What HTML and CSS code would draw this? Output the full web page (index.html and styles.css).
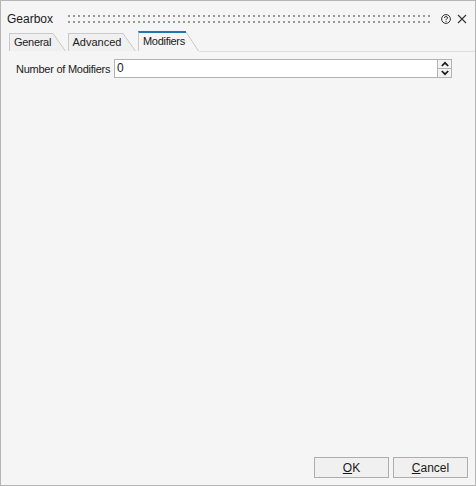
FILE: index.html
```html
<!DOCTYPE html>
<html>
<head>
<meta charset="utf-8">
<link rel="stylesheet" href="styles.css">
</head>
<body>
<div class="window">
  <div class="titlebar">
    <span class="title">Gearbox</span>
    <span class="grip"></span>
    <svg class="icon help" width="10" height="10" viewBox="0 0 10 10">
      <circle cx="5" cy="5" r="4.4" fill="none" stroke="#333" stroke-width="1"/>
      <path d="M3.4 3.9 Q3.4 2.6 5 2.6 Q6.6 2.6 6.6 3.8 Q6.6 4.6 5.6 5 Q5 5.3 5 6.1" fill="none" stroke="#333" stroke-width="1"/>
      <rect x="4.5" y="6.9" width="1" height="1" fill="#333"/>
    </svg>
    <svg class="icon close" width="10" height="10" viewBox="0 0 10 10">
      <path d="M1 1 L9 9 M9 1 L1 9" stroke="#333" stroke-width="1.1"/>
    </svg>
  </div>
  <div class="tabs">
    <div class="tab">
      <span class="tab-label tab-general">General</span>
      <svg class="tab-edge" width="13" height="18" viewBox="0 0 13 18"><polygon points="0,0 0.5,0 12.5,18 0,18" fill="#f0f0f0"/><line x1="0" y1="0.5" x2="12.5" y2="18" stroke="#c9c9c9" stroke-width="1"/></svg>
    </div>
    <div class="tab">
      <span class="tab-label tab-advanced">Advanced</span>
      <svg class="tab-edge" width="13" height="18" viewBox="0 0 13 18"><polygon points="0,0 0.5,0 12.5,18 0,18" fill="#f0f0f0"/><line x1="0" y1="0.5" x2="12.5" y2="18" stroke="#c9c9c9" stroke-width="1"/></svg>
    </div>
    <div class="tab tab-active">
      <span class="tab-label tab-modifiers">Modifiers</span>
      <svg class="tab-edge" width="13" height="20" viewBox="0 0 13 20"><polygon points="0,0 0.5,0 12.5,20 0,20" fill="#f5f5f5"/><line x1="0" y1="1" x2="12.5" y2="20" stroke="#c9c9c9" stroke-width="1"/></svg>
    </div>
    <div class="tab-fill"></div>
  </div>
  <div class="content">
    <div class="field-row">
      <span class="field-label">Number of Modifiers</span>
      <div class="spinbox">
        <div class="spin-input">0</div>
        <div class="spin-buttons">
          <div class="spin-btn">
            <svg width="8" height="6" viewBox="0 0 8 6"><path d="M0.8 5 L4 1.8 L7.2 5" fill="none" stroke="#1a1a1a" stroke-width="1.7"/></svg>
          </div>
          <div class="spin-btn">
            <svg width="8" height="6" viewBox="0 0 8 6"><path d="M0.8 1 L4 4.2 L7.2 1" fill="none" stroke="#1a1a1a" stroke-width="1.7"/></svg>
          </div>
        </div>
      </div>
    </div>
  </div>
  <div class="buttons">
    <button class="btn"><span class="u">O</span>K</button>
    <button class="btn"><span class="u">C</span>ancel</button>
  </div>
</div>
</body>
</html>
```
FILE: styles.css
```css
html, body {
  margin: 0;
  padding: 0;
}
body {
  font-family: "Liberation Sans", Arial, sans-serif;
  font-size: 11px;
  color: #1a1a1a;
  background: #f5f5f5;
}
.window {
  width: 476px;
  height: 486px;
  box-sizing: border-box;
  border: 1px solid #b5b5b5;
  background: #f5f5f5;
  display: flex;
  flex-direction: column;
}
.titlebar {
  height: 24px;
  padding-top: 6px;
  padding-left: 6px;
  padding-right: 8px;
  display: flex;
  align-items: center;
}
.title {
  font-size: 12px;
  color: #1a1a1a;
}
.grip {
  flex: 1;
  height: 8px;
  margin-left: 15px;
  background-image:
    linear-gradient(to right, #999999 2px, transparent 2px),
    linear-gradient(to right, #999999 2px, transparent 2px);
  background-size: 5px 2px, 5px 2px;
  background-position: 0 0, 0 6px;
  background-repeat: repeat-x, repeat-x;
}
.icon {
  display: block;
}
.help {
  margin-left: 9px;
}
.close {
  margin-left: 6px;
}
.tabs {
  display: flex;
  align-items: flex-end;
  height: 21px;
  padding-left: 8px;
}
.tab {
  display: flex;
  align-items: flex-end;
  height: 18px;
  margin-right: 2px;
  margin-bottom: 1px;
}
.tab-label {
  box-sizing: border-box;
  height: 18px;
  line-height: 17px;
  border-left: 1px solid #c9c9c9;
  border-top: 1px solid #c9c9c9;
  background: #f0f0f0;
  padding-left: 4px;
  white-space: nowrap;
  overflow: hidden;
}
.tab-general {
  width: 44px;
  letter-spacing: -0.3px;
}
.tab-advanced {
  width: 56px;
}
.tab-modifiers {
  width: 48px;
  letter-spacing: -0.3px;
}
.tab-edge {
  display: block;
  margin-left: -0.5px;
}
.tab-active {
  height: 20px;
}
.tab-active .tab-label {
  height: 20px;
  line-height: 17px;
  border-top: 2px solid #1f77b0;
  background: #f5f5f5;
}
.tab-fill {
  flex: 1;
  align-self: flex-end;
  height: 1px;
  background: #dedede;
  margin-left: -2px;
}
.content {
  flex: 1;
  padding: 7px 23px 0 15px;
}
.field-row {
  display: flex;
  align-items: center;
  gap: 5px;
}
.field-label {
  width: 93px;
  white-space: nowrap;
  letter-spacing: -0.25px;
}
.spinbox {
  flex: 1;
  display: flex;
  height: 19px;
}
.spin-input {
  flex: 1;
  box-sizing: border-box;
  border: 1px solid #b3b3b3;
  background: #fff;
  padding-left: 2px;
  line-height: 17px;
  font-size: 12px;
}
.spin-buttons {
  width: 14px;
  display: flex;
  flex-direction: column;
}
.spin-btn {
  flex: 1;
  box-sizing: border-box;
  border: 1px solid #b3b3b3;
  border-left: 0;
  background: #f3f3f3;
  display: flex;
  align-items: center;
  justify-content: center;
}
.spin-btn + .spin-btn {
  border-top: 0;
}
.buttons {
  display: flex;
  justify-content: flex-end;
  gap: 4px;
  padding: 0 7px 7px 0;
}
.btn {
  width: 75px;
  height: 21px;
  box-sizing: border-box;
  border: 1px solid #adadad;
  background: #f0f0f0;
  font-family: "Liberation Sans", Arial, sans-serif;
  font-size: 12px;
  color: #1a1a1a;
  padding: 0;
  margin: 0;
  border-radius: 0;
}
.u {
  text-decoration: underline;
}
```
